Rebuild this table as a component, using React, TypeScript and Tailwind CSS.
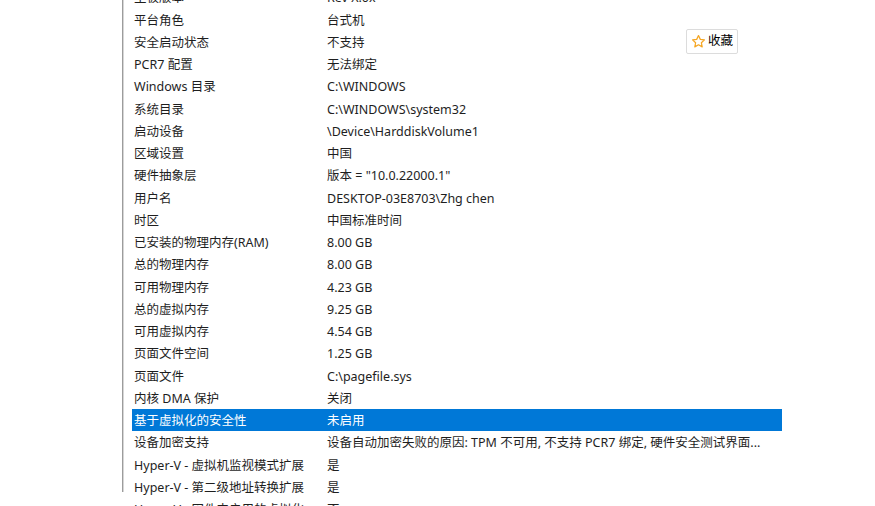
import React from 'react';

interface Row {
  name: string;
  value: string;
}

const rows: Row[] = [
  { name: '主板版本', value: 'Rev X.0x' },
  { name: '平台角色', value: '台式机' },
  { name: '安全启动状态', value: '不支持' },
  { name: 'PCR7 配置', value: '无法绑定' },
  { name: 'Windows 目录', value: 'C:\\WINDOWS' },
  { name: '系统目录', value: 'C:\\WINDOWS\\system32' },
  { name: '启动设备', value: '\\Device\\HarddiskVolume1' },
  { name: '区域设置', value: '中国' },
  { name: '硬件抽象层', value: '版本 = "10.0.22000.1"' },
  { name: '用户名', value: 'DESKTOP-03E8703\\Zhg chen' },
  { name: '时区', value: '中国标准时间' },
  { name: '已安装的物理内存(RAM)', value: '8.00 GB' },
  { name: '总的物理内存', value: '8.00 GB' },
  { name: '可用物理内存', value: '4.23 GB' },
  { name: '总的虚拟内存', value: '9.25 GB' },
  { name: '可用虚拟内存', value: '4.54 GB' },
  { name: '页面文件空间', value: '1.25 GB' },
  { name: '页面文件', value: 'C:\\pagefile.sys' },
  { name: '内核 DMA 保护', value: '关闭' },
  { name: '基于虚拟化的安全性', value: '未启用' },
  { name: '设备加密支持', value: '设备自动加密失败的原因: TPM 不可用, 不支持 PCR7 绑定, 硬件安全测试界面...' },
  { name: 'Hyper-V - 虚拟机监视模式扩展', value: '是' },
  { name: 'Hyper-V - 第二级地址转换扩展', value: '是' },
  { name: 'Hyper-V - 固件中启用的虚拟化', value: '否' },
];

const SELECTED = 19;

export default function App() {
  return (
    <div
      className="relative w-[875px] h-[506px] overflow-hidden bg-white text-[12.5px] text-[#1e1e1e]"
      style={{ fontFamily: '"Noto Sans", "Noto Sans CJK SC", sans-serif' }}
    >
      <div className="ml-[122px] h-full border-l border-[#9c9c9c]">
        <div className="h-full border-l border-[#d6d6d6]">
          <div className="-mt-[14px] pl-[8px]">
            {rows.map((row, i) => (
              <div
                key={i}
                className={
                  'flex h-[22.25px] w-[650px] items-center pt-[3px] leading-none ' +
                  (i === SELECTED ? 'bg-[#0078d7] text-white' : '')
                }
              >
                <span className="w-[195px] shrink-0 pl-[2px] whitespace-nowrap">{row.name}</span>
                <span className="whitespace-nowrap">{row.value}</span>
              </div>
            ))}
          </div>
        </div>
      </div>

      <button className="absolute left-[686px] top-[29px] flex h-[25px] items-center gap-[2px] rounded-[2px] border border-[#dcdcdc] bg-white px-[4px] text-[12.5px] text-black">
        <svg width="15" height="15" viewBox="0 0 24 24" fill="none" stroke="#f5a623" strokeWidth="2" strokeLinejoin="round">
          <polygon points="12,2.5 14.9,8.6 21.5,9.4 16.6,14 17.9,20.6 12,17.3 6.1,20.6 7.4,14 2.5,9.4 9.1,8.6" />
        </svg>
        <span>收藏</span>
      </button>
    </div>
  );
}
